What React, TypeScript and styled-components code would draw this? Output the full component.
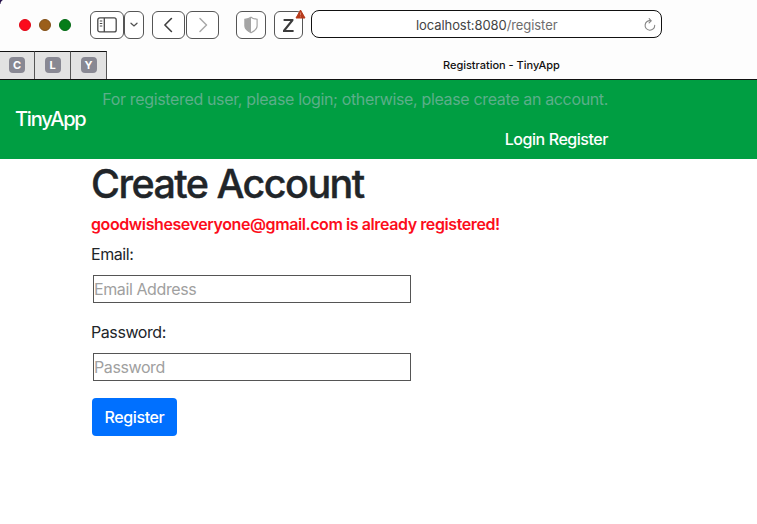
import React from "react";
import styled, { createGlobalStyle } from "styled-components";

const GlobalStyle = createGlobalStyle`
  * { box-sizing: border-box; }
  body {
    margin: 0;
    background: #fff;
    color: #212529;
    font-family: Inter, "Liberation Sans", sans-serif;
    font-size: 16px;
    line-height: 24px;
  }
  h1, p { margin: 0; }
`;

const Window = styled.div`
  position: relative;
  width: 757px;
  height: 524px;
  overflow: hidden;
  background: #fff;
`;

const DesktopCorner = styled.div`
  position: absolute;
  top: 0;
  left: 0;
  width: 5px;
  height: 4px;
  background: radial-gradient(circle at 100% 100%, transparent 4px, #25104a 5px);
`;

const Toolbar = styled.header`
  display: flex;
  align-items: flex-start;
  height: 51px;
  padding: 10px 0 0 19px;
  background: #fdfdfd;
`;

const TrafficLights = styled.div`
  display: flex;
  gap: 8px;
  width: 71px;
  padding-top: 9px;
`;

const Light = styled.span<{ $fill: string; $edge: string }>`
  width: 12px;
  height: 12px;
  border: 1px solid ${(p) => p.$edge};
  border-radius: 50%;
  background: ${(p) => p.$fill};
`;

const ToolButton = styled.button<{ $width: number; $after?: number }>`
  position: relative;
  display: flex;
  align-items: center;
  justify-content: center;
  flex: none;
  width: ${(p) => p.$width}px;
  height: 28px;
  margin: 1px ${(p) => p.$after ?? 0}px 0 0;
  padding: 0;
  border: 1px solid #555;
  border-radius: 6px;
  background: #fff;
`;

const WarningMark = styled.svg`
  position: absolute;
  top: -3px;
  right: -4px;
`;

const AddressBar = styled.div`
  display: flex;
  align-items: center;
  flex: none;
  width: 351px;
  height: 28px;
  padding: 2px 5px 0 104px;
  border: 1px solid #111;
  border-radius: 8px;
  background: #fff;
  color: #444;
  font-size: 13px;
  letter-spacing: -0.08px;
`;

const UrlPath = styled.span`
  color: #6d6d6d;
`;

const ReloadIcon = styled.svg`
  margin-left: auto;
`;

const TabStrip = styled.nav`
  display: flex;
  height: 29px;
  border-bottom: 1px solid #111;
  background: #fdfdfd;
`;

const PinnedTab = styled.div<{ $width: number }>`
  display: flex;
  justify-content: center;
  align-items: flex-start;
  width: ${(p) => p.$width}px;
  padding-top: 5px;
  border-top: 1px solid #111;
  border-right: 1px solid #555;
  background: #e2e2e2;
`;

const TabLetter = styled.span`
  width: 16px;
  height: 16px;
  border-radius: 4px;
  background: #888893;
  color: #fff;
  font-size: 11px;
  font-weight: 700;
  line-height: 16px;
  text-align: center;
`;

const TabTitle = styled.div`
  padding-left: 336px;
  color: #111;
  font-size: 11px;
  font-weight: 500;
  line-height: 28px;
  letter-spacing: -0.02px;
`;

const Navbar = styled.nav`
  display: flex;
  align-items: center;
  height: 79px;
  padding: 0 0 2px 15px;
  background: #009e42;
`;

const Brand = styled.a`
  width: 87px;
  color: #fff;
  font-size: 20px;
  font-weight: 500;
  letter-spacing: -1.2px;
`;

const NavContent = styled.div`
  display: flex;
  flex-direction: column;
  align-items: flex-end;
  gap: 16px;
  width: 506px;
`;

const NavText = styled.p`
  color: #5cae8a;
  white-space: nowrap;
  letter-spacing: -0.35px;
`;

const NavLinks = styled.div`
  display: flex;
  gap: 4px;
  color: #fff;
  font-weight: 500;
  letter-spacing: -0.46px;
`;

const Main = styled.main`
  padding: 1px 0 0 91px;
`;

const Title = styled.h1`
  font-size: 39.5px;
  font-weight: 500;
  line-height: 48px;
  letter-spacing: -1.55px;
  -webkit-text-stroke: 0.4px currentColor;
`;

const ErrorText = styled.p`
  height: 24px;
  margin-top: 4px;
  color: #fc0d1b;
  font-weight: 600;
  white-space: nowrap;
  letter-spacing: -0.41px;
`;

const Field = styled.label<{ $top: number }>`
  display: block;
  margin-top: ${(p) => p.$top}px;
  letter-spacing: -0.42px;
`;

const Input = styled.input`
  display: block;
  width: 318px;
  height: 28px;
  margin: 9px 0 0 2px;
  padding: 1px 0;
  border: 1px solid #555;
  border-radius: 0;
  background: #fff;
  font: inherit;
  letter-spacing: -0.4px;
  &::placeholder { color: #a0a0a0; opacity: 1; }
`;

const SubmitButton = styled.button`
  width: 85px;
  height: 38px;
  margin: 17px 0 0 1px;
  padding: 0;
  border: 0;
  border-radius: 4px;
  background: #0070ff;
  color: #fff;
  font: inherit;
  font-weight: 500;
  letter-spacing: -0.4px;
`;

const lights = [
  { fill: "#fc0a1c", edge: "#e00717" },
  { fill: "#9b5f1b", edge: "#825018" },
  { fill: "#057d19", edge: "#046a15" },
];

export default function App() {
  return (
    <Window>
      <GlobalStyle />
      <Toolbar>
        <TrafficLights>
          {lights.map((l) => <Light key={l.fill} $fill={l.fill} $edge={l.edge} />)}
        </TrafficLights>
        <ToolButton $width={34} aria-label="Show sidebar">
          <svg width="20" height="16" viewBox="0 0 20 16" fill="none" stroke="#484848" strokeWidth="1.3">
            <rect x="0.8" y="0.9" width="18.4" height="14" rx="2" />
            <path d="M7.3 1v14" />
            <path d="M2.8 4h2.5M2.8 6.5h2.5M2.8 9h2.5" strokeWidth="1" />
          </svg>
        </ToolButton>
        <ToolButton $width={20} $after={8} aria-label="Sidebar options">
          <svg width="8" height="6" viewBox="0 0 8 6" fill="none" stroke="#505050" strokeWidth="1.3" strokeLinecap="round">
            <path d="M1 1.3l3 2.7 3-2.7" />
          </svg>
        </ToolButton>
        <ToolButton $width={33} $after={1} aria-label="Back">
          <svg width="10" height="16" viewBox="0 0 10 16" fill="none" stroke="#3e3e3e" strokeWidth="1.6" strokeLinecap="round" strokeLinejoin="round">
            <path d="M7.4 1.5L0.9 8l6.5 6.5" />
          </svg>
        </ToolButton>
        <ToolButton $width={33} $after={17} aria-label="Forward">
          <svg width="10" height="16" viewBox="0 0 10 16" fill="none" stroke="#a9a9a9" strokeWidth="1.5" strokeLinecap="round" strokeLinejoin="round">
            <path d="M2 1.5L8.5 8 2 14.5" />
          </svg>
        </ToolButton>
        <ToolButton $width={30} $after={8} aria-label="Privacy report">
          <svg width="14" height="18" viewBox="0 0 14 18">
            <path d="M7 1.2C5.2 2.7 3.2 3.1 0.9 3.3V10c0 3.2 2.7 5 6.1 6.7 3.4-1.7 6.1-3.5 6.1-6.7V3.3C10.8 3.1 8.8 2.7 7 1.2z" fill="#fff" stroke="#a5a5a5" strokeWidth="1.2" />
            <path d="M7 1.2C5.2 2.7 3.2 3.1 0.9 3.3V10c0 3.2 2.7 5 6.1 6.7z" fill="#a5a5a5" />
          </svg>
        </ToolButton>
        <ToolButton $width={29} $after={8} aria-label="Extension">
          <svg width="11" height="13" viewBox="0 0 11 13" fill="#3c3c3c">
            <path d="M0.6 0h9.8v1.7L3 11.1h7.6V13H0v-1.7l7.4-9.4H0.6z" />
          </svg>
          <WarningMark width="11" height="10" viewBox="0 0 11 10">
            <path d="M5.5 1L10 9H1z" fill="#b63a1b" stroke="#b63a1b" strokeWidth="1" strokeLinejoin="round" />
            <path d="M5.5 3.5v2.8M5.5 7.4v0.9" stroke="#d98570" strokeWidth="0.9" />
          </WarningMark>
        </ToolButton>
        <AddressBar>
          localhost:8080<UrlPath>/register</UrlPath>
          <ReloadIcon width="12" height="14" viewBox="0 0 12 14" fill="none" stroke="#858585" strokeWidth="1.1" strokeLinecap="round" strokeLinejoin="round">
            <path d="M6.8 2.7A4.8 4.8 0 1 0 10.7 7.4" />
            <path d="M5.2 0.7L7.2 2.8 5.1 4.9" />
          </ReloadIcon>
        </AddressBar>
      </Toolbar>
      <TabStrip>
        <PinnedTab $width={35}><TabLetter>C</TabLetter></PinnedTab>
        <PinnedTab $width={36}><TabLetter>L</TabLetter></PinnedTab>
        <PinnedTab $width={36}><TabLetter>Y</TabLetter></PinnedTab>
        <TabTitle>Registration - TinyApp</TabTitle>
      </TabStrip>
      <Navbar>
        <Brand>TinyApp</Brand>
        <NavContent>
          <NavText>For registered user, please login; otherwise, please create an account.</NavText>
          <NavLinks><span>Login</span><span>Register</span></NavLinks>
        </NavContent>
      </Navbar>
      <Main>
        <Title>Create Account</Title>
        <ErrorText>goodwisheseveryone@gmail.com is already registered!</ErrorText>
        <Field $top={6}>Email:<Input type="email" placeholder="Email Address" /></Field>
        <Field $top={17}>Password:<Input type="password" placeholder="Password" /></Field>
        <SubmitButton type="button">Register</SubmitButton>
      </Main>
      <DesktopCorner />
    </Window>
  );
}
